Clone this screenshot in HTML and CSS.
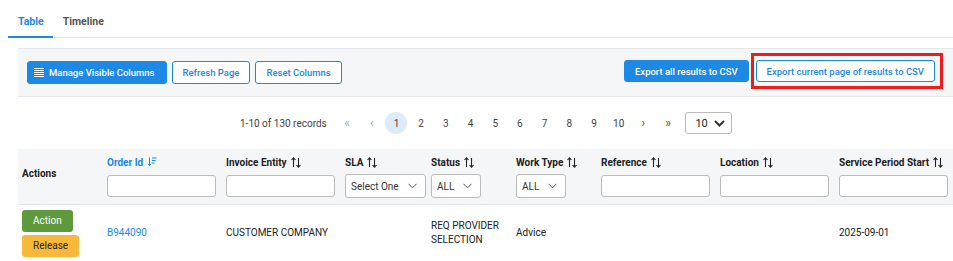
FILE: index.html
```html
<!DOCTYPE html>
<html lang="en">
<head>
    <meta charset="utf-8">
    <link rel="stylesheet" href="styles.css">
</head>
<body>

<!-- zalozky -->
<div class="tabs">
    <span class="tab active">Table</span>
    <span class="tab">Timeline</span>
</div>

<!-- panel s tlacidlami -->
<div class="toolbar">
    <div class="toolbar-left">
        <button class="btn btn-blue btn-icon">
            <svg width="10" height="9" viewBox="0 0 10 9"><path d="M0 0.5h10M0 2.5h10M0 4.5h10M0 6.5h10M0 8.5h10" stroke="#fff" stroke-width="1"/></svg>
            Manage Visible Columns
        </button>
        <button class="btn btn-outline">Refresh Page</button>
        <button class="btn btn-outline">Reset Columns</button>
    </div>
    <div class="toolbar-right">
        <button class="btn btn-blue">Export all results to CSV</button>
        <span class="marked">
            <button class="btn btn-outline">Export current page of results to CSV</button>
        </span>
    </div>
</div>

<!-- strankovanie -->
<div class="pager">
    <span class="records">1-10 of 130 records</span>
    <span class="pg arrow">&laquo;</span>
    <span class="pg arrow">&lsaquo;</span>
    <span class="pg current">1</span>
    <span class="pg">2</span>
    <span class="pg">3</span>
    <span class="pg">4</span>
    <span class="pg">5</span>
    <span class="pg">6</span>
    <span class="pg">7</span>
    <span class="pg">8</span>
    <span class="pg">9</span>
    <span class="pg">10</span>
    <span class="pg arrow dark">&rsaquo;</span>
    <span class="pg arrow dark">&raquo;</span>
    <div class="size-select">10 <svg width="11" height="7" viewBox="0 0 11 7"><path d="M1 1l4.5 4.5L10 1" fill="none" stroke="#333" stroke-width="2"/></svg></div>
</div>

<!-- tabulka -->
<table class="grid">
    <thead>
        <tr>
            <th class="c-actions">Actions</th>
            <th class="c-wide"><div class="label sorted">Order Id <svg class="ico" width="10" height="10" viewBox="0 0 10 10"><path d="M2.5 0.5v8M0.8 6.8l1.7 1.9 1.7-1.9M5 1h4.5M5 3.5h3.5M5 6h2.5" fill="none" stroke="#1e88e5" stroke-width="1"/></svg></div><input class="filter"></th>
            <th class="c-wide"><div class="label">Invoice Entity <svg class="ico" width="10" height="11" viewBox="0 0 10 11"><path d="M2.5 10V1M0.5 3l2-2.2 2 2.2M7.5 1v9M5.5 8l2 2.2 2-2.2" fill="none" stroke="#222" stroke-width="1.1"/></svg></div><input class="filter"></th>
            <th class="c-sla"><div class="label">SLA <svg class="ico" width="10" height="11" viewBox="0 0 10 11"><path d="M2.5 10V1M0.5 3l2-2.2 2 2.2M7.5 1v9M5.5 8l2 2.2 2-2.2" fill="none" stroke="#222" stroke-width="1.1"/></svg></div><div class="dd dd-sla">Select One <svg width="9" height="6" viewBox="0 0 9 6"><path d="M0.5 0.8l4 4 4-4" fill="none" stroke="#555" stroke-width="1"/></svg></div></th>
            <th class="c-mid"><div class="label">Status <svg class="ico" width="10" height="11" viewBox="0 0 10 11"><path d="M2.5 10V1M0.5 3l2-2.2 2 2.2M7.5 1v9M5.5 8l2 2.2 2-2.2" fill="none" stroke="#222" stroke-width="1.1"/></svg></div><div class="dd">ALL <svg width="9" height="6" viewBox="0 0 9 6"><path d="M0.5 0.8l4 4 4-4" fill="none" stroke="#555" stroke-width="1"/></svg></div></th>
            <th class="c-mid"><div class="label">Work Type <svg class="ico" width="10" height="11" viewBox="0 0 10 11"><path d="M2.5 10V1M0.5 3l2-2.2 2 2.2M7.5 1v9M5.5 8l2 2.2 2-2.2" fill="none" stroke="#222" stroke-width="1.1"/></svg></div><div class="dd">ALL <svg width="9" height="6" viewBox="0 0 9 6"><path d="M0.5 0.8l4 4 4-4" fill="none" stroke="#555" stroke-width="1"/></svg></div></th>
            <th class="c-wide"><div class="label">Reference <svg class="ico" width="10" height="11" viewBox="0 0 10 11"><path d="M2.5 10V1M0.5 3l2-2.2 2 2.2M7.5 1v9M5.5 8l2 2.2 2-2.2" fill="none" stroke="#222" stroke-width="1.1"/></svg></div><input class="filter"></th>
            <th class="c-wide"><div class="label">Location <svg class="ico" width="10" height="11" viewBox="0 0 10 11"><path d="M2.5 10V1M0.5 3l2-2.2 2 2.2M7.5 1v9M5.5 8l2 2.2 2-2.2" fill="none" stroke="#222" stroke-width="1.1"/></svg></div><input class="filter"></th>
            <th class="c-last"><div class="label">Service Period Start <svg class="ico" width="10" height="11" viewBox="0 0 10 11"><path d="M2.5 10V1M0.5 3l2-2.2 2 2.2M7.5 1v9M5.5 8l2 2.2 2-2.2" fill="none" stroke="#222" stroke-width="1.1"/></svg></div><input class="filter"></th>
        </tr>
    </thead>
    <tbody>
        <tr>
            <td class="c-actions">
                <button class="act act-green">Action</button>
                <button class="act act-yellow">Release</button>
            </td>
            <td><a class="link">B944090</a></td>
            <td>CUSTOMER COMPANY</td>
            <td></td>
            <td>REQ PROVIDER<br>SELECTION</td>
            <td>Advice</td>
            <td></td>
            <td></td>
            <td>2025-09-01</td>
        </tr>
    </tbody>
</table>

</body>
</html>
```

FILE: styles.css
```css
* {
    box-sizing: border-box;
}

body {
    margin: 0;
    padding: 0 0 0 8px;
    font-family: "Roboto", "Liberation Sans", sans-serif;
    font-size: 10px;
    color: #222;
    background: #fff;
    overflow: hidden;
    width: 953px;
    height: 261px;
}

/* zalozky */
.tabs {
    display: flex;
    height: 38px;
    border-bottom: 1px solid #dee2e6;
    padding-top: 15px;
}

.tab {
    padding: 0 9px 0 10px;
    font-size: 10.5px;
    font-weight: 700;
    color: #555;
    height: 22px;
}

.tab.active {
    color: #1e88e5;
    border-bottom: 2px solid #1e88e5;
    margin-bottom: -1px;
    height: 23px;
}

/* panel */
.toolbar {
    margin: 10px 0 0 10px;
    height: 49px;
    background: #f5f6f8;
    border-top: 1px solid #e3e6ea;
    border-bottom: 1px solid #e3e6ea;
    display: flex;
    justify-content: space-between;
    align-items: center;
    padding: 0 10px 0 9px;
}

.toolbar-left,
.toolbar-right {
    display: flex;
    align-items: center;
    gap: 5px;
}

.toolbar-right {
    gap: 2px;
    margin-top: -3px;
}

.btn {
    font-family: inherit;
    font-size: 9.5px;
    font-weight: 500;
    height: 23px;
    padding: 0 10px;
    border-radius: 3px;
    cursor: pointer;
    display: flex;
    align-items: center;
    gap: 5px;
}

.btn-icon {
    padding: 0 11px 0 6px;
}

.btn-blue {
    background: #1e88e5;
    border: 1px solid #1e88e5;
    color: #fff;
}

.btn-outline {
    background: #fff;
    border: 1px solid #1e88e5;
    color: #1e88e5;
}

.toolbar-right .btn {
    height: 22px;
}

/* cervene oznacenie */
.marked {
    display: block;
    border: 3px solid #f01c1c;
    padding: 4px 5px 4px 2px;
}

/* strankovanie */
.pager {
    display: flex;
    align-items: center;
    height: 52px;
    padding-left: 232px;
    color: #444;
}

.records {
    margin-right: 8px;
}

.pg {
    width: 24.7px;
    height: 22px;
    display: flex;
    align-items: center;
    justify-content: center;
    color: #444;
}

.pg.arrow {
    color: #aaa;
    font-size: 12px;
}

.pg.arrow.dark {
    color: #555;
}

.pg.current {
    width: 22px;
    margin: 0 1.35px;
    background: #ddebf8;
    border-radius: 50%;
}

.size-select {
    margin-left: 5px;
    width: 47px;
    height: 22px;
    border: 1px solid #bbb;
    border-radius: 3px;
    display: flex;
    align-items: center;
    justify-content: space-between;
    padding: 0 6px 0 9px;
    font-size: 11px;
    color: #222;
}

/* tabulka */
.grid {
    margin-left: 10px;
    border-collapse: collapse;
    table-layout: fixed;
    width: 935px;
}

.grid th {
    background: #f5f6f8;
    border-bottom: 1px solid #e3e6ea;
    text-align: left;
    vertical-align: top;
    padding: 6px 4px 0;
    font-weight: 700;
    height: 55px;
}

.grid th.c-actions {
    vertical-align: middle;
    padding-top: 0;
    padding-bottom: 5px;
}

.c-actions { width: 85px; }
.c-wide { width: 119px; }
.c-sla { width: 86px; }
.c-mid { width: 85px; }
.c-last { width: 118px; }

.label {
    display: flex;
    align-items: center;
    gap: 4px;
    height: 14px;
    margin-bottom: 6px;
    white-space: nowrap;
}

.label.sorted {
    color: #1e88e5;
}

.filter {
    display: block;
    width: 109px;
    height: 22px;
    border: 1px solid #bbb;
    border-radius: 3px;
    background: #fff;
}

.dd {
    display: inline-flex;
    align-items: center;
    gap: 9px;
    height: 24px;
    padding: 0 8px 0 5px;
    border: 1px solid #bbb;
    border-radius: 3px;
    background: #fff;
    font-weight: 400;
    color: #333;
    margin-top: -1px;
    white-space: nowrap;
}

.grid td {
    padding: 5px 4px 4px;
    vertical-align: middle;
    line-height: 14px;
}

.act {
    display: block;
    font-family: inherit;
    font-size: 10px;
    border: 0;
    border-radius: 3px;
    height: 22px;
    padding: 0 11px;
}

.act-green {
    background: #5e9a3b;
    color: #fff;
    margin-bottom: 3px;
}

.act-yellow {
    background: #f8b83a;
    color: #222;
}

.link {
    color: #1e88e5;
}
```
